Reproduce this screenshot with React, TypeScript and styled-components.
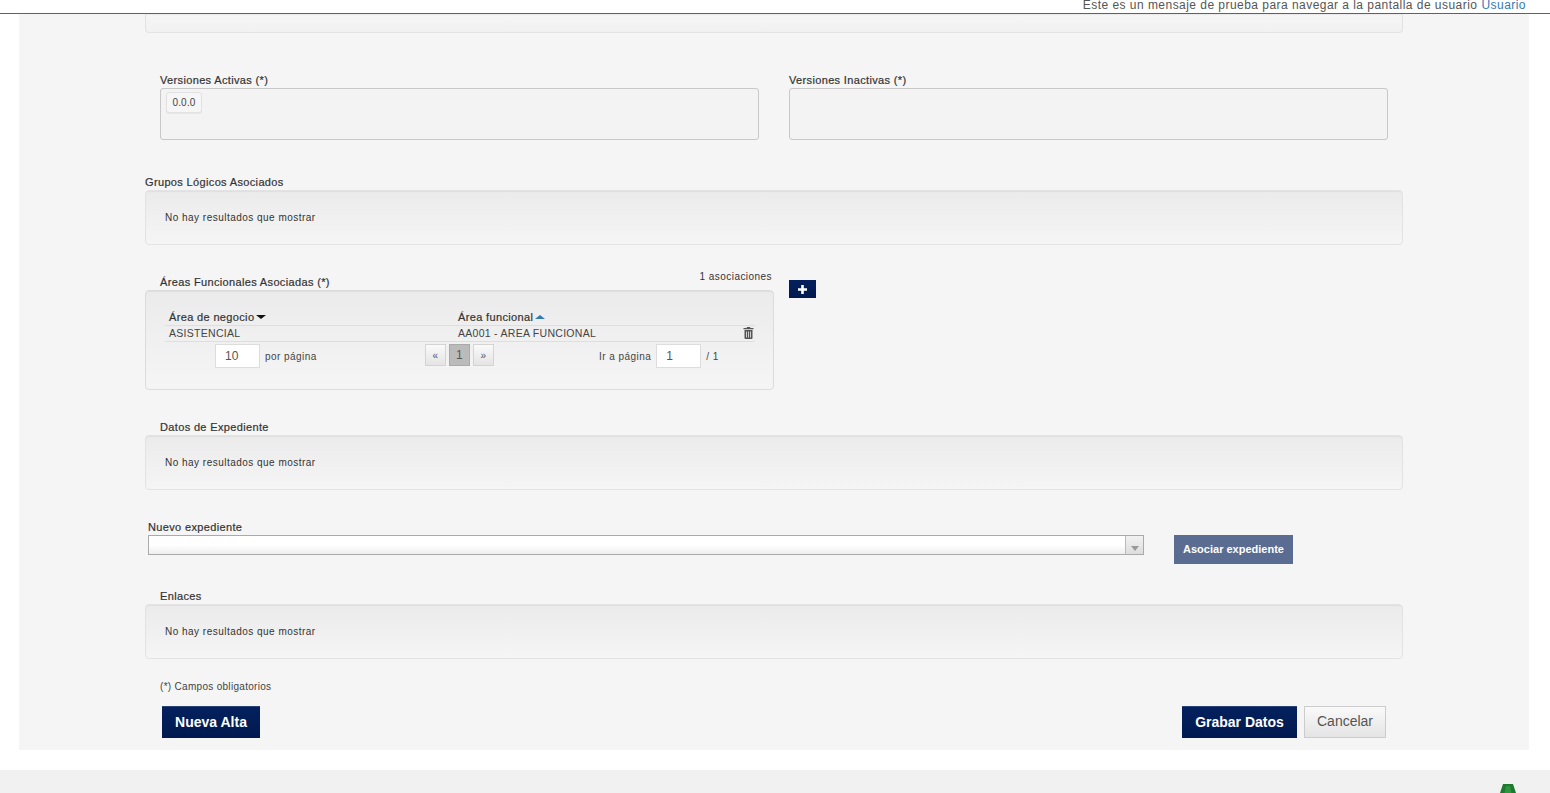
import React from "react";
import styled, { createGlobalStyle } from "styled-components";

const Global = createGlobalStyle`
  html, body { margin: 0; padding: 0; background: #fff; height: 793px; overflow: hidden; }
  body { font-family: "Liberation Sans", Arial, sans-serif; font-size: 11px; color: #333; }
  * { box-sizing: border-box; }
`;

const TopBar = styled.header`
  height: 14px;
  border-bottom: 1px solid #3a6a98;
  display: flex;
  justify-content: flex-end;
  align-items: flex-end;
  padding-right: 24px;
  overflow: hidden;
  font-size: 12px;
  letter-spacing: 0.46px;
  color: #555;
  a { color: #337ab7; margin-left: 4px; }
`;
const TopText = styled.div`
  display: flex;
  height: 13px;
  margin-top: -6px;
  line-height: 13px;
  white-space: pre;
  transform: translateY(-1px);
`;
const Panel = styled.main`
  width: 1510px;
  height: 736px;
  margin-left: 19px;
  background: #f5f5f5;
  padding-left: 126px;
  display: flex;
  flex-direction: column;
`;
const Well = styled.div<{ $h: number; $w?: number }>`
  width: ${(p) => p.$w ?? 1258}px;
  height: ${(p) => p.$h}px;
  border: 1px solid #e3e3e3;
  border-radius: 4px;
  background: linear-gradient(#ebebeb, #f5f5f5);
  box-shadow: inset 0 1px 1px rgba(0, 0, 0, 0.05);
  flex: none;
`;
const TopWell = styled(Well)`
  border-top: 0;
  border-radius: 0 0 4px 4px;
  background: linear-gradient(#f6f6f6, #f1f1f1);
`;
const EmptyWell = styled(Well)`
  display: flex;
  align-items: center;
  margin-top: 1px;
  padding: 0 19px;
  font-size: 10px;
  letter-spacing: 0.48px;
  color: #333;
`;
const Label = styled.label<{ $x?: number; $top: number }>`
  display: block;
  margin: ${(p) => p.$top}px 0 0 ${(p) => p.$x ?? 15}px;
  height: 13px;
  line-height: 13px;
  font-size: 11px;
  font-weight: 400;
  letter-spacing: 0.35px;
  color: #333;
  -webkit-text-stroke: 0.2px #333;
  white-space: nowrap;
  flex: none;
`;
const VersionsRow = styled.div`
  display: flex;
  gap: 30px;
  margin: 41px 0 0 15px;
  flex: none;
`;
const VersionCol = styled.div`
  width: 599px;
`;
const VersionBox = styled.div`
  height: 52px;
  margin-top: 1px;
  border: 1px solid #c8c8c8;
  border-radius: 3px;
  background: #f3f3f3;
  padding: 3px 5px;
`;
const Chip = styled.span`
  display: inline-flex;
  align-items: center;
  justify-content: center;
  width: 36px;
  height: 21px;
  border: 1px solid #e2e2e2;
  border-radius: 3px;
  background: #f6f6f6;
  box-shadow: 0 1px 1px rgba(0, 0, 0, 0.05);
  font-size: 10px;
  letter-spacing: 0.2px;
  color: #444;
`;
const AreasRow = styled.div`
  display: flex;
  margin-top: 23px;
  flex: none;
`;
const AreasCol = styled.div`
  width: 629px;
`;
const AreasHead = styled.div`
  display: flex;
  justify-content: space-between;
  height: 22px;
  padding: 0 2px 0 15px;
`;
const AreasLabel = styled.span`
  font-size: 11px;
  letter-spacing: 0.35px;
  line-height: 13px;
  padding-top: 8px;
  -webkit-text-stroke: 0.2px #333;
`;
const Count = styled.span`
  font-size: 10px;
  letter-spacing: 0.45px;
  line-height: 13px;
  margin-top: 2px;
  color: #333;
`;
const AreasWell = styled(Well)`
  padding: 18px 18px 0 19px;
  border-color: #dcdcdc;
`;
const HeadRow = styled.div`
  display: grid;
  grid-template-columns: 289px 1fr;
  height: 16px;
  align-items: center;
  font-size: 11px;
  letter-spacing: 0.35px;
  -webkit-text-stroke: 0.2px #333;
  padding-left: 4px;
`;
const SortCell = styled.span`
  display: inline-flex;
  align-items: center;
  gap: 2px;
`;
const Caret = styled.i<{ $up?: boolean; $color: string }>`
  display: inline-block;
  width: 0;
  height: 0;
  border-left: 5px solid transparent;
  border-right: 5px solid transparent;
  ${(p) =>
    p.$up
      ? `border-bottom: 4px solid ${p.$color};`
      : `border-top: 4px solid ${p.$color};`}
`;
const DataRow = styled.div`
  display: grid;
  grid-template-columns: 289px 1fr 16px;
  height: 17px;
  align-items: center;
  padding: 0 0 1px 4px;
  border-top: 1px solid #dedede;
  border-bottom: 1px solid #dedede;
  font-size: 10.5px;
  letter-spacing: 0.28px;
  color: #444;
  svg { justify-self: end; margin-right: 1px; }
`;
const Pager = styled.div`
  display: grid;
  grid-template-columns: 260px 174px 1fr;
  height: 24px;
  margin-top: 2px;
  align-items: center;
  font-size: 10px;
  letter-spacing: 0.45px;
  color: #444;
`;
const PerPage = styled.div`
  display: flex;
  align-items: center;
  gap: 5px;
  padding-left: 50px;
`;
const PageInput = styled.div`
  width: 45px;
  height: 24px;
  border: 1px solid #ddd;
  background: #fff;
  display: flex;
  align-items: center;
  padding-left: 9px;
  font-size: 12px;
  letter-spacing: 0;
  color: #555;
`;
const PageButtons = styled.div`
  display: flex;
  gap: 3px;
  align-self: start;
`;
const PageBtn = styled.span<{ $active?: boolean }>`
  width: 21px;
  height: 22px;
  display: flex;
  align-items: center;
  justify-content: center;
  border: 1px solid ${(p) => (p.$active ? "#aaa" : "#d4d4d4")};
  background: ${(p) => (p.$active ? "#bbb" : "linear-gradient(#fafafa, #e4e4e4)")};
  font-size: ${(p) => (p.$active ? "12px" : "10px")};
  color: #555;
`;
const GoTo = styled.div`
  display: flex;
  align-items: center;
  gap: 5px;
`;
const PlusBtn = styled.button`
  width: 27px;
  height: 18px;
  margin: 12px 0 0 15px;
  border: 0;
  padding: 0;
  background: linear-gradient(#04205c, #001a50);
  display: flex;
  align-items: center;
  justify-content: center;
`;
const SelectRow = styled.div`
  display: flex;
  margin: 1px 0 0 3px;
  flex: none;
`;
const SelectBox = styled.div`
  width: 996px;
  height: 20px;
  border: 1px solid #aaa;
  background: linear-gradient(#fff 50%, #eee);
  display: flex;
  justify-content: flex-end;
`;
const SelectArrow = styled.span`
  width: 18px;
  border-left: 1px solid #bbb;
  background: linear-gradient(#f2f2f2, #ddd);
  display: flex;
  align-items: flex-end;
  justify-content: center;
  padding-bottom: 3px;
`;
const SmallCaret = styled.i`
  width: 0;
  height: 0;
  border-left: 4px solid transparent;
  border-right: 4px solid transparent;
  border-top: 5px solid #999;
`;
const AssocBtn = styled.button`
  width: 119px;
  height: 29px;
  margin-left: 30px;
  border: 0;
  background: #5a6c91;
  color: #fff;
  font-family: inherit;
  font-size: 11px;
  font-weight: 700;
  padding: 0 0 2px;
`;
const Note = styled.div`
  margin: 21px 0 0 15px;
  height: 13px;
  line-height: 13px;
  font-size: 10px;
  letter-spacing: 0.3px;
  color: #444;
  flex: none;
`;
const Actions = styled.div`
  display: flex;
  margin: 13px 0 0 17px;
  width: 1224px;
  flex: none;
`;
const PrimaryBtn = styled.button<{ $w: number }>`
  width: ${(p) => p.$w}px;
  height: 32px;
  border: 0;
  border-top: 1px solid #2a4478;
  background: linear-gradient(#04215e, #001a50);
  color: #fff;
  font-family: inherit;
  font-size: 14px;
  font-weight: 700;
  padding: 0 0 2px;
`;
const SaveBtn = styled(PrimaryBtn)`
  margin-left: auto;
`;
const CancelBtn = styled.button`
  width: 82px;
  height: 32px;
  margin-left: 7px;
  border: 1px solid #ccc;
  background: linear-gradient(#fafafa, #e4e4e4);
  color: #555;
  font-family: inherit;
  font-size: 14px;
  padding: 0 0 2px;
`;
const Footer = styled.footer`
  height: 23px;
  margin-top: 20px;
  background: #f1f1f1;
  display: flex;
  justify-content: flex-end;
  align-items: flex-end;
  padding-right: 34px;
  overflow: hidden;
`;

const Trash = () => (
  <svg width="11" height="12" viewBox="0 0 11 12" fill="#555">
    <path d="M4 0h3l.5 1h3v1.200H.500V1h3z" />
    <path d="M1.500 3h8v8a1 1 0 0 1-1 1h-6a1 1 0 0 1-1-1z" />
    <path d="M3.500 4.500v6M5.500 4.500v6M7.500 4.500v6" stroke="#eee" strokeWidth="0.8" />
  </svg>
);

const Plus = () => (
  <svg width="9" height="9" viewBox="0 0 9 9" fill="#fff">
    <path d="M3.200 0h2.600v3.200H9v2.600H5.800V9H3.200V5.800H0V3.200h3.200z" />
  </svg>
);

export default function App() {
  return (
    <>
      <Global />
      <TopBar>
        <TopText>
          Este es un mensaje de prueba para navegar a la pantalla de usuario
          <a>Usuario</a>
        </TopText>
      </TopBar>
      <Panel>
        <TopWell $h={19} />
        <VersionsRow>
          <VersionCol>
            <Label $x={0} $top={0}>Versiones Activas (*)</Label>
            <VersionBox>
              <Chip>0.0.0</Chip>
            </VersionBox>
          </VersionCol>
          <VersionCol>
            <Label $x={0} $top={0}>Versiones Inactivas (*)</Label>
            <VersionBox />
          </VersionCol>
        </VersionsRow>
        <Label $x={0} $top={36}>Grupos Lógicos Asociados</Label>
        <EmptyWell $h={55}>No hay resultados que mostrar</EmptyWell>
        <AreasRow>
          <AreasCol>
            <AreasHead>
              <AreasLabel>Áreas Funcionales Asociadas (*)</AreasLabel>
              <Count>1 asociaciones</Count>
            </AreasHead>
            <AreasWell $h={100} $w={629}>
              <HeadRow>
                <SortCell>Área de negocio <Caret $color="#111" /></SortCell>
                <SortCell>Área funcional <Caret $up $color="#337ab7" /></SortCell>
              </HeadRow>
              <DataRow>
                <span>ASISTENCIAL</span>
                <span>AA001 - AREA FUNCIONAL</span>
                <Trash />
              </DataRow>
              <Pager>
                <PerPage>
                  <PageInput>10</PageInput>
                  por página
                </PerPage>
                <PageButtons>
                  <PageBtn>«</PageBtn>
                  <PageBtn $active>1</PageBtn>
                  <PageBtn>»</PageBtn>
                </PageButtons>
                <GoTo>
                  Ir a página
                  <PageInput>1</PageInput>
                  / 1
                </GoTo>
              </Pager>
            </AreasWell>
          </AreasCol>
          <PlusBtn aria-label="Añadir"><Plus /></PlusBtn>
        </AreasRow>
        <Label $top={31}>Datos de Expediente</Label>
        <EmptyWell $h={55}>No hay resultados que mostrar</EmptyWell>
        <Label $x={3} $top={31}>Nuevo expediente</Label>
        <SelectRow>
          <SelectBox>
            <SelectArrow><SmallCaret /></SelectArrow>
          </SelectBox>
          <AssocBtn>Asociar expediente</AssocBtn>
        </SelectRow>
        <Label $top={26}>Enlaces</Label>
        <EmptyWell $h={55}>No hay resultados que mostrar</EmptyWell>
        <Note>(*) Campos obligatorios</Note>
        <Actions>
          <PrimaryBtn $w={98}>Nueva Alta</PrimaryBtn>
          <SaveBtn $w={115}>Grabar Datos</SaveBtn>
          <CancelBtn>Cancelar</CancelBtn>
        </Actions>
      </Panel>
      <Footer>
        <svg width="16" height="9" viewBox="0 0 16 9">
          <path d="M3 0h10l3 9H0z" fill="#1f7a2f" />
          <path d="M6 2h4l1.500 7h-7z" fill="#2f9440" />
        </svg>
      </Footer>
    </>
  );
}
